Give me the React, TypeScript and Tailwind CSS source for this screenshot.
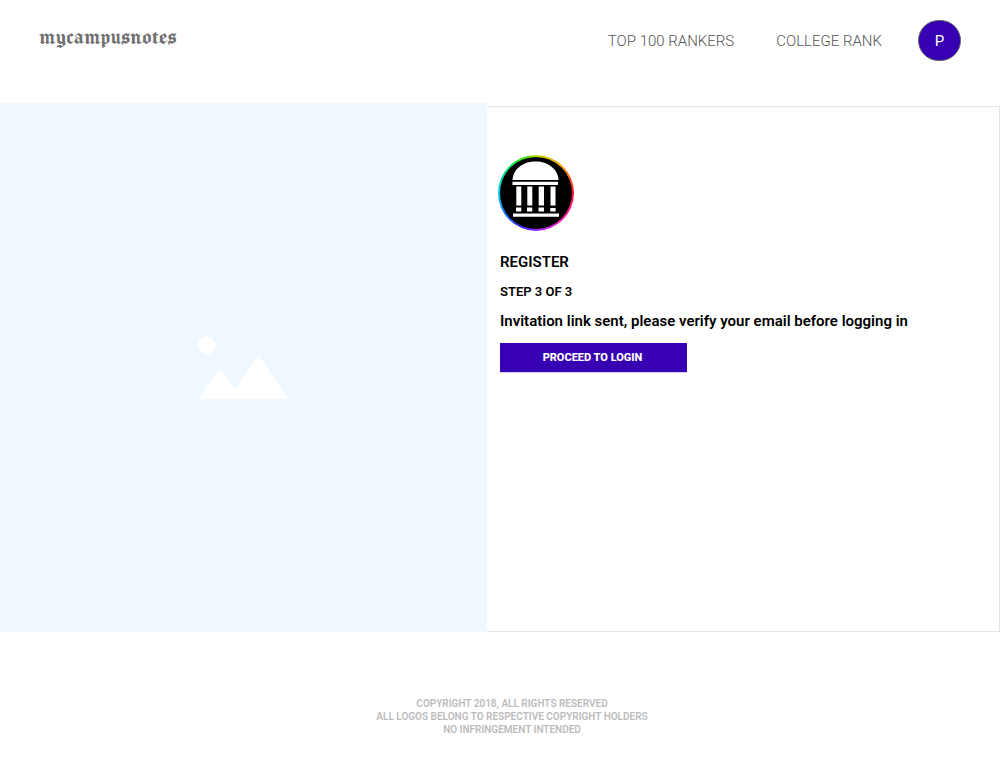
import React from "react";

function Picture() {
  return (
    <svg viewBox="0 0 92 64" className="h-16 w-[92px]" fill="#fff" aria-hidden="true">
      <circle cx="8.700" cy="9.300" r="8.800" />
      <path d="M1 62.700 21.500 32 37 53 60.500 19.500 90.500 62.700Z" />
    </svg>
  );
}

function CollegeLogo() {
  return (
    <div className="flex size-19 items-center justify-center rounded-full bg-[conic-gradient(#b8e000,#ff9800_45deg,#ff1030_90deg,#ff1493_125deg,#d020f0_160deg,#5a20ff_195deg,#1060ff_230deg,#00c8f0_270deg,#00e070_310deg,#30e000_340deg,#b8e000)]">
      <svg viewBox="0 0 72 72" className="size-[72px]" aria-hidden="true">
        <circle cx="36" cy="36" r="36" fill="#000" />
        <g fill="#fff" transform="translate(0 -1)">
          <path d="M12.500 24C13 13 23 5.500 35.500 5.500S58 13 58.500 24Z" />
          <path d="M12.500 25.700h45.500v3.300h-45.500zM13 57.500h46v3.200h-46z" />
          <path d="M16.300 30.500h5v19h-5zM27.300 30.500h5v19h-5zM38.700 30.500h5.300v19h-5.300zM50.500 30.500h5v19h-5z" />
          <path d="M16 51.500h5.300v4h-5.300zM27 51.500h5.300v4h-5.300zM38.500 51.500h5.500v4h-5.500zM50.300 52h5.300v3.500h-5.300z" />
        </g>
      </svg>
    </div>
  );
}

export default function App() {
  return (
    <div className="bg-white font-['Roboto',sans-serif] text-black">
      <header className="flex items-start justify-between px-[39px] pt-5 pb-[42px]">
        <a
          href="#home"
          className="pt-1 font-['Manufacturing_Consent','UnifrakturMaguntia','Liberation_Serif',serif] text-[25px] leading-6 text-[#707070]"
        >
          mycampusnotes
        </a>
        <nav className="flex items-center text-[15px] leading-5 font-light text-[#555]">
          <a href="#rankers" className="mr-[42px] pt-px">TOP 100 RANKERS</a>
          <a href="#college" className="mr-9 pt-px">COLLEGE RANK</a>
          <button
            type="button"
            className="h-[41px] w-[43px] rounded-full border border-[#666] bg-[#3700b3] font-normal text-white"
          >
            P
          </button>
        </nav>
      </header>

      <main className="flex min-h-[529px]">
        <div className="flex w-[48.7%] items-center justify-center bg-[#f0f8ff]">
          <Picture />
        </div>
        <section className="mt-[3px] flex flex-1 flex-col items-start border border-l-0 border-[#e3e3e3] pt-12 pl-[11px]">
          <CollegeLogo />
          <div className="flex flex-col items-start pl-0.5">
            <h1 className="mt-[21px] text-[15px] leading-5 font-semibold">REGISTER</h1>
            <h2 className="mt-[10px] text-[13px] leading-5 font-semibold">STEP 3 OF 3</h2>
            <p className="mt-[9px] text-[15px] leading-5 font-semibold">
              Invitation link sent, please verify your email before logging in
            </p>
            <button
              type="button"
              className="mt-3 h-[29px] w-[187px] bg-[#3700b3] pt-px pr-0.5 text-[11px] font-extrabold text-white shadow-[0_1px_0_#d9d0f0]"
            >
              PROCEED TO LOGIN
            </button>
          </div>
        </section>
      </main>

      <footer className="pt-[65px] pb-[30px] pl-6 text-center text-[10px] leading-[13px] font-semibold text-[#bcbcbc]">
        <p>COPYRIGHT 2018, ALL RIGHTS RESERVED</p>
        <p>ALL LOGOS BELONG TO RESPECTIVE COPYRIGHT HOLDERS</p>
        <p>NO INFRINGEMENT INTENDED</p>
      </footer>
    </div>
  );
}
